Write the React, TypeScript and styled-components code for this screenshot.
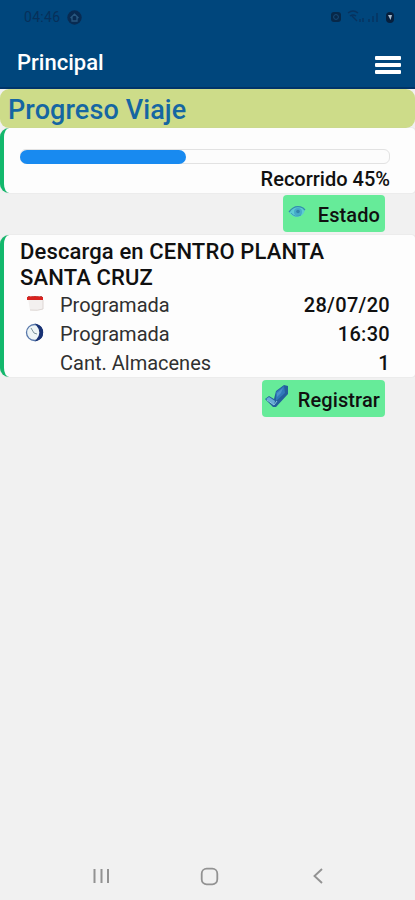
import React from 'react';
import styled, { createGlobalStyle } from 'styled-components';

const GlobalStyle = createGlobalStyle`
  * { box-sizing: border-box; }
  body { margin: 0; background: #f1f1f1; font-family: Roboto, sans-serif; color: #101010; }
`;

const Screen = styled.div`
  height: 900px;
  display: flex;
  flex-direction: column;
  overflow: hidden;
  background: #f1f1f1;
`;

const Header = styled.header`
  height: 89px;
  flex: none;
  background: #00467c;
  border-bottom: 2px solid #003468;
`;

const StatusBar = styled.div`
  height: 34px;
  display: flex;
  align-items: center;
  justify-content: space-between;
  padding: 0 20px 0 24px;
  color: #07305a;
  font-size: 14px;
  letter-spacing: 0.3px;
`;

const StatusGroup = styled.div`
  display: flex;
  align-items: center;
  gap: 7px;
  svg { display: block; }
`;

const AppBar = styled.div`
  height: 54px;
  display: flex;
  align-items: center;
  justify-content: space-between;
  padding: 2px 14px 0 17px;
`;

const AppTitle = styled.h1`
  margin: 0;
  color: #fff;
  font-size: 22px;
  font-weight: 500;
`;

const MenuButton = styled.button`
  width: 26px;
  padding: 6px 0 0;
  border: 0;
  background: none;
  display: grid;
  gap: 3px;
`;

const MenuBar = styled.span`
  height: 4px;
  border-radius: 1px;
  background: #fff;
`;

const Banner = styled.h2`
  margin: 0;
  height: 39px;
  flex: none;
  padding: 1px 8px 0;
  border-radius: 9px;
  background: #cddc89;
  color: #1566a2;
  font-size: 27px;
  line-height: 40px;
  font-weight: 500;
  letter-spacing: 0.1px;
  white-space: nowrap;
`;

const Card = styled.section<{ $height: number }>`
  height: ${(p) => p.$height}px;
  flex: none;
  border-left: 4px solid #13b86c;
  border-radius: 9px 3px 3px 9px;
  background: #fdfdfd;
  padding: 0 25px 0 16px;
  box-shadow: 0 0 1px #c4c4c4;
`;

const Track = styled.div`
  height: 15px;
  margin-top: 21px;
  border: 1px solid #e2e2e2;
  border-radius: 6px;
  background: #fcfcfc;
`;

const Fill = styled.div`
  height: 14px;
  margin-left: -1px;
  border-radius: 7px;
  background: #188af0;
`;

const ProgressLabel = styled.div`
  margin-top: 3px;
  text-align: right;
  font-size: 20px;
  line-height: 24px;
  font-weight: 500;
`;

const ActionRow = styled.div<{ $height: number }>`
  height: ${(p) => p.$height}px;
  flex: none;
  display: flex;
  justify-content: flex-end;
  align-items: center;
  padding-right: 30px;
`;

const ActionButton = styled.button<{ $width: number }>`
  width: ${(p) => p.$width}px;
  height: 37px;
  margin-bottom: 1px;
  padding: 3px 5px 0 3px;
  border: 0;
  border-radius: 4px;
  background: #66eb99;
  color: #101010;
  display: flex;
  align-items: center;
  justify-content: space-between;
  font: 500 20px Roboto, sans-serif;
  letter-spacing: 0.1px;
  svg { display: block; margin-bottom: 6px; }
`;

const StopTitle = styled.h3`
  margin: 0 0 -1px;
  padding-top: 4px;
  font-size: 22px;
  line-height: 26px;
  font-weight: 500;
  letter-spacing: 0.14px;
`;

const DetailRow = styled.div`
  height: 29px;
  display: grid;
  grid-template-columns: 40px 1fr auto;
  align-items: center;
  font-size: 20px;
`;

const DetailIcon = styled.span`
  padding-left: 5px;
  svg { display: block; margin-bottom: 3px; }
`;

const DetailLabel = styled.span`
  color: #303030;
`;

const DetailValue = styled.span`
  font-weight: 500;
  letter-spacing: 0.3px;
`;

const NavBar = styled.nav`
  height: 48px;
  margin-top: auto;
  display: grid;
  grid-template-columns: 19px 19px 12px;
  gap: 89px 89px;
  align-items: center;
  padding-left: 92px;
  svg { display: block; }
  svg:last-child { margin-left: 4px; }
`;

const HomeBadge = () => (
  <svg width="15" height="15" viewBox="0 0 15 15">
    <circle cx="7.5" cy="7.5" r="7.2" fill="#082b52" />
    <path d="M3.5 8 7.5 4.2 11.5 8M5 7v4h5V7" fill="none" stroke="#28577f" strokeWidth="1.3" />
  </svg>
);

const SystemIcons = () => (
  <svg width="64" height="16" viewBox="0 0 64 16">
    <rect x="0" y="3" width="10" height="10" rx="3" fill="#072849" />
    <circle cx="5" cy="8" r="2.4" fill="none" stroke="#174b78" />
    <path d="M17 4q5-4 10 0M19 7q3-2 6 0M21 7l5 5M29 10v3M32 9v4M38 10v3M42 7v6M46 4v9" fill="none" stroke="#07335f" strokeWidth="1.4" />
    <rect x="55" y="3" width="8" height="11" rx="4" fill="#061f3d" />
    <path d="M57 6h4l-1.5 5Z" fill="#a9bdd0" />
  </svg>
);

const EyeIcon = () => (
  <svg width="22" height="16" viewBox="0 0 22 16">
    <path d="M3 8Q9-1 17 4L19 6Q17 13 11 13 6 13 3 8Z" fill="#5ccbd2" />
    <path d="M3 8Q9 0 17 4L19 6" fill="none" stroke="#338dac" strokeWidth="1.3" />
    <circle cx="12" cy="8" r="4" fill="#46aac9" />
    <circle cx="12" cy="7.5" r="1.8" fill="#3084ac" />
    <path d="M5 9Q9 14 15 11" fill="none" stroke="#3da0bd" />
  </svg>
);

const CheckIcon = () => (
  <svg width="24" height="25" viewBox="0 0 24 25">
    <path d="M0 15 4 12 9 15 11 7 19 1 23 2V10L11 23 8 23Z" fill="#245f9c" />
    <path d="M1 15 4 13 10 17 9 21Z" fill="#67aad6" />
    <path d="M11 8 19 2 20 9 11 17Z" fill="#3178b9" />
    <path d="M12 9 18 4 16 9 12 13Z" fill="#4a91c9" />
    <path d="M2 16 9 21 12 17" fill="none" stroke="#8ac4e0" />
  </svg>
);

const CalendarIcon = () => (
  <svg width="20" height="18" viewBox="0 0 20 18">
    <path d="M3 5h15v10q-5 2-13 1Z" fill="#f3f0ef" />
    <path d="M5 16q8 1 13-1V6" fill="none" stroke="#ddd6d3" />
    <path d="M2 3q8-2 16 0v3H2Z" fill="#d92320" />
    <path d="M3 2.5h14" stroke="#b6504c" strokeDasharray="2 2" />
  </svg>
);

const ClockIcon = () => (
  <svg width="19" height="19" viewBox="0 0 19 19">
    <circle cx="9.5" cy="9.5" r="8" fill="#edf4f6" stroke="#5878ab" strokeWidth="1.3" />
    <path d="M11.5 1.5a8.3 8.3 0 0 1 0 16q7-8 0-16Z" fill="#183274" stroke="#183274" strokeWidth="1.2" />
    <path d="M6 5l3 5 3 1" fill="none" stroke="#7d949c" strokeWidth="1" />
  </svg>
);

const details = [
  { icon: <CalendarIcon />, label: 'Programada', value: '28/07/20' },
  { icon: <ClockIcon />, label: 'Programada', value: '16:30' },
  { icon: null, label: 'Cant. Almacenes', value: '1' },
];

export default function App() {
  const progress = 45;
  return (
    <Screen>
      <GlobalStyle />
      <Header>
        <StatusBar>
          <StatusGroup>04:46 <HomeBadge /></StatusGroup>
          <SystemIcons />
        </StatusBar>
        <AppBar>
          <AppTitle>Principal</AppTitle>
          <MenuButton aria-label="Menú"><MenuBar /><MenuBar /><MenuBar /></MenuButton>
        </AppBar>
      </Header>
      <Banner>Progreso Viaje</Banner>
      <Card $height={65}>
        <Track><Fill style={{ width: `${progress}%` }} /></Track>
        <ProgressLabel>Recorrido {progress}%</ProgressLabel>
      </Card>
      <ActionRow $height={42}>
        <ActionButton $width={102}><EyeIcon />Estado</ActionButton>
      </ActionRow>
      <Card $height={142}>
        <StopTitle>Descarga en CENTRO PLANTA SANTA CRUZ</StopTitle>
        {details.map((d, i) => (
          <DetailRow key={i}>
            <DetailIcon>{d.icon}</DetailIcon>
            <DetailLabel>{d.label}</DetailLabel>
            <DetailValue>{d.value}</DetailValue>
          </DetailRow>
        ))}
      </Card>
      <ActionRow $height={43}>
        <ActionButton $width={123}><CheckIcon />Registrar</ActionButton>
      </ActionRow>
      <NavBar>
        <svg width="19" height="18" viewBox="0 0 19 18">
          <path d="M2.5 2v14M9.5 2v14M16 2v14" stroke="#929292" strokeWidth="2" />
        </svg>
        <svg width="19" height="19" viewBox="0 0 19 19">
          <rect x="1.7" y="1.7" width="15.6" height="15.6" rx="5" fill="none" stroke="#929292" strokeWidth="1.8" />
        </svg>
        <svg width="12" height="18" viewBox="0 0 12 18">
          <path d="M10 2 2.5 9l7.5 7" fill="none" stroke="#929292" strokeWidth="1.9" />
        </svg>
      </NavBar>
    </Screen>
  );
}
